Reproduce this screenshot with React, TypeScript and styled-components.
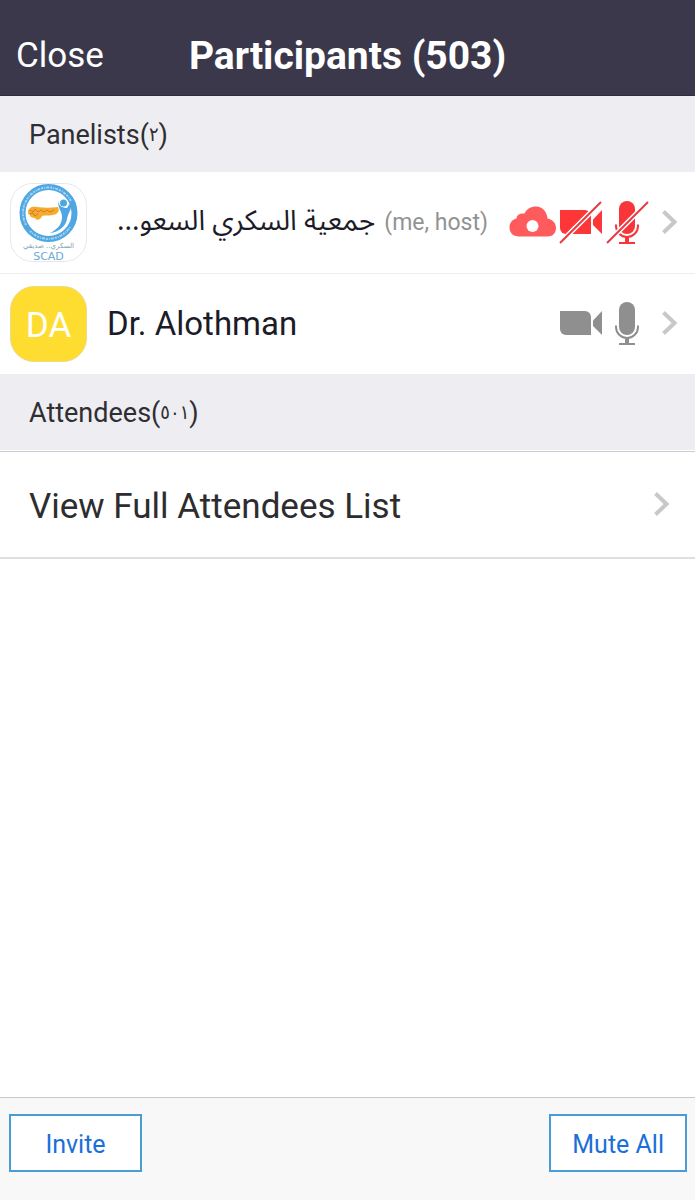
import React from "react";
import styled, { createGlobalStyle } from "styled-components";

const GlobalStyle = createGlobalStyle`
  *, *::before, *::after { box-sizing: border-box; }
  body {
    margin: 0;
    background: #ffffff;
    font-family: Roboto, "DejaVu Sans", sans-serif;
  }
  button { font-family: inherit; cursor: pointer; }
`;

const Screen = styled.div`
  min-height: 100vh;
  display: flex;
  flex-direction: column;
  background: #ffffff;
`;

const Header = styled.header`
  display: grid;
  grid-template-columns: 1fr auto 1fr;
  align-items: center;
  height: 96px;
  padding: 16px 16px 0;
  background: #3b384c;
  border-bottom: 1px solid #2f2b40;
  color: #ffffff;
`;

const CloseButton = styled.button`
  justify-self: start;
  padding: 0;
  border: 0;
  background: none;
  color: inherit;
  font-size: 35px;
  line-height: 40px;
`;

const Title = styled.h1`
  margin: 0;
  font-size: 39px;
  line-height: 44px;
  font-weight: 700;
`;

const Main = styled.main`
  flex: 1;
`;

const SectionTitle = styled.h2`
  display: flex;
  align-items: center;
  height: 76px;
  margin: 0;
  padding: 2px 29px 0;
  background: #eeedf2;
  color: #2e2e33;
  font-size: 27px;
  line-height: 32px;
  font-weight: 400;
`;

const Digits = styled.span`
  font-family: "DejaVu Sans Condensed", "DejaVu Sans", sans-serif;
  font-size: 20px;
  line-height: 20px;
  vertical-align: 3px;
`;

const List = styled.ul`
  margin: 0;
  padding: 0;
  list-style: none;
`;

const Row = styled.li`
  display: flex;
  align-items: center;
  height: 101px;
  padding: 0 17px 0 10px;

  & + & {
    border-top: 1px solid #ededf0;
  }
`;

const InitialsAvatar = styled.div`
  display: flex;
  align-items: center;
  justify-content: center;
  width: 77px;
  height: 76px;
  padding-top: 4px;
  border: 1px solid #ecd98a;
  border-radius: 24px;
  background: #ffdd30;
  color: #ffffff;
  font-size: 35px;
  line-height: 40px;
`;

const Name = styled.span`
  margin-left: 20px;
  color: #1c1c28;
  font-size: 33px;
  line-height: 40px;
  white-space: nowrap;
`;

const ArabicName = styled(Name)`
  margin-left: 30px;
  padding-bottom: 2px;
  font-family: "Noto Sans Arabic", "DejaVu Sans", sans-serif;
  font-size: 28px;
`;

const Role = styled.span`
  margin-left: 9px;
  color: #929292;
  font-size: 23px;
  line-height: 40px;
  white-space: nowrap;
`;

const Status = styled.div`
  display: flex;
  align-items: center;
  gap: 3px;
  margin-left: auto;
  padding-bottom: 2px;
`;

const RowChevron = styled.span`
  display: flex;
  margin-left: 9px;
`;

const FullListButton = styled.button`
  display: flex;
  align-items: center;
  justify-content: space-between;
  width: 100%;
  height: 108px;
  margin-top: 1px;
  padding: 4px 25px 0 29px;
  border: 0;
  border-top: 1px solid #cbcccf;
  border-bottom: 2px solid #dededf;
  background: #ffffff;
  color: #2d2d30;
  font-size: 35px;
  line-height: 44px;
  text-align: left;
`;

const ButtonChevron = styled.span`
  display: flex;
  padding-bottom: 6px;
`;

const Footer = styled.footer`
  display: flex;
  justify-content: space-between;
  height: 103px;
  padding: 16px 8px 0 9px;
  border-top: 1px solid #c8c8c8;
  background: #f8f8f8;
`;

const ActionButton = styled.button`
  height: 58px;
  min-width: 133px;
  padding: 4px 21px 0;
  border: 2px solid #4a9cd6;
  background: #ffffff;
  color: #1b6fd8;
  font-size: 25px;
  line-height: 32px;
`;

const Chevron = () => (
  <svg width="16" height="24" viewBox="0 0 16 24" aria-hidden="true">
    <path d="M1.500 1.500 12.500 12 1.500 22.500" fill="none" stroke="#c8c8c8" strokeWidth="4" />
  </svg>
);

const CloudIcon = () => (
  <svg width="47" height="50" viewBox="0 0 47 50" role="img" aria-label="Recording to cloud">
    <path
      fill="#ff5a5c"
      d="M10 39.500C4 39.500 .5 35.500 .5 30.500c0-4.500 2.500-8 7-9C7.500 18 11 16 15.500 16.500 17.500 12 22 9.500 27 9.500c6.500 0 11 5 11.500 12C43.500 22.500 47 26 47 31c0 5-3.500 8.500-8.500 8.500z"
    />
    <circle cx="23.500" cy="29" r="6" fill="#ffffff" />
  </svg>
);

const CameraIcon = ({ off = false }: { off?: boolean }) => (
  <svg width="44" height="50" viewBox="0 0 44 50" role="img" aria-label={off ? "Camera off" : "Camera on"}>
    <g fill={off ? "#ff3638" : "#8f8f8f"}>
      <path d="M1 13H26a6 6 0 0 1 6 6V37H7a6 6 0 0 1-6-6z" />
      <path d="M34 22.500 43 13V37L34 28z" />
    </g>
    {off && (
      <>
        <path d="M1 46 42 5" stroke="#ffffff" strokeWidth="5" />
        <path d="M1 46 42 5" stroke="#e63a40" strokeWidth="2" />
      </>
    )}
  </svg>
);

const MicIcon = ({ off = false }: { off?: boolean }) => {
  const color = off ? "#f8363a" : "#8f8f8f";
  return (
    <svg width="44" height="50" viewBox="0 0 44 50" role="img" aria-label={off ? "Microphone muted" : "Microphone on"}>
      <rect x="13" y="4" width="16" height="33" rx="8" fill={color} />
      <path d="M10 27.500V29a11 11 0 0 0 22 0V27.500" fill="none" stroke={color} strokeWidth="2" />
      <path d="M13 46H29" fill="none" stroke={color} strokeWidth="2" />
      <path d="M19 40h4v5h-4z" fill={color} />
      {off && (
        <>
          <path d="M1 46 42 5" stroke="#ffffff" strokeWidth="5" />
          <path d="M1 46 42 5" stroke="#e63a40" strokeWidth="2" />
        </>
      )}
    </svg>
  );
};

const LogoAvatar = () => (
  <svg width="77" height="79" viewBox="0 0 77 79" role="img" aria-label="SCAD">
    <rect x=".5" y=".5" width="76" height="78" rx="22" fill="#ffffff" stroke="#e8e8ec" />
    <circle cx="38.500" cy="30" r="26" fill="none" stroke="#4ea6e2" strokeWidth="6" />
    <path
      d="M16 42A25.500 25.500 0 0 1 61 18M20 48A25.500 25.500 0 0 0 60 44"
      fill="none"
      stroke="#a5d3f2"
      strokeWidth="2"
      strokeDasharray="2 1 1 1 3 1"
    />
    <path
      d="M18 29C18 25 22 23 27 24c7 1 14 1 21 0 2 4 0 7-5 8-5 1-8 0-11 1-1 4-6 5-7 2-3 0-5-1-5-3-1 0-2-1-2-3z"
      fill="#f3ac2c"
    />
    <path
      d="M20 27l3 2 2-3 3 3 3-2 3 2 3-2 3 2 4-2M20 31l3-1 2 3 3-2"
      fill="none"
      stroke="#d9772b"
      strokeWidth="1"
    />
    <circle cx="53.500" cy="20" r="3.500" fill="#4ea6e2" />
    <path
      d="M48 18c1 5 4 7 9 7l5-8c1 7-4 13-5 19-1 7-8 13-17 14 8-4 12-9 12-16 0-6-4-8-4-16z"
      fill="#4ea6e2"
    />
    <text
      x="38.500"
      y="65"
      textAnchor="middle"
      direction="rtl"
      fontFamily="DejaVu Sans, sans-serif"
      fontSize="7"
      fill="#7f9eb2"
    >
      السكري.. صديقي
    </text>
    <text x="38.500" y="77" textAnchor="middle" fontFamily="DejaVu Sans, sans-serif" fontSize="11" fill="#6baad8">
      SCAD
    </text>
  </svg>
);

export default function App() {
  return (
    <Screen>
      <GlobalStyle />
      <Header>
        <CloseButton type="button">Close</CloseButton>
        <Title>Participants (503)</Title>
      </Header>
      <Main>
        <SectionTitle>
          <span>
            Panelists(<Digits>٢</Digits>)
          </span>
        </SectionTitle>
        <List>
          <Row>
            <LogoAvatar />
            <ArabicName dir="rtl" lang="ar">
              جمعية السكري السعو...
            </ArabicName>
            <Role>(me, host)</Role>
            <Status>
              <CloudIcon />
              <CameraIcon off />
              <MicIcon off />
              <RowChevron>
                <Chevron />
              </RowChevron>
            </Status>
          </Row>
          <Row>
            <InitialsAvatar>DA</InitialsAvatar>
            <Name>Dr. Alothman</Name>
            <Status>
              <CameraIcon />
              <MicIcon />
              <RowChevron>
                <Chevron />
              </RowChevron>
            </Status>
          </Row>
        </List>
        <SectionTitle>
          <span>
            Attendees(<Digits>٥٠١</Digits>)
          </span>
        </SectionTitle>
        <FullListButton type="button">
          View Full Attendees List
          <ButtonChevron>
            <Chevron />
          </ButtonChevron>
        </FullListButton>
      </Main>
      <Footer>
        <ActionButton type="button">Invite</ActionButton>
        <ActionButton type="button">Mute All</ActionButton>
      </Footer>
    </Screen>
  );
}
